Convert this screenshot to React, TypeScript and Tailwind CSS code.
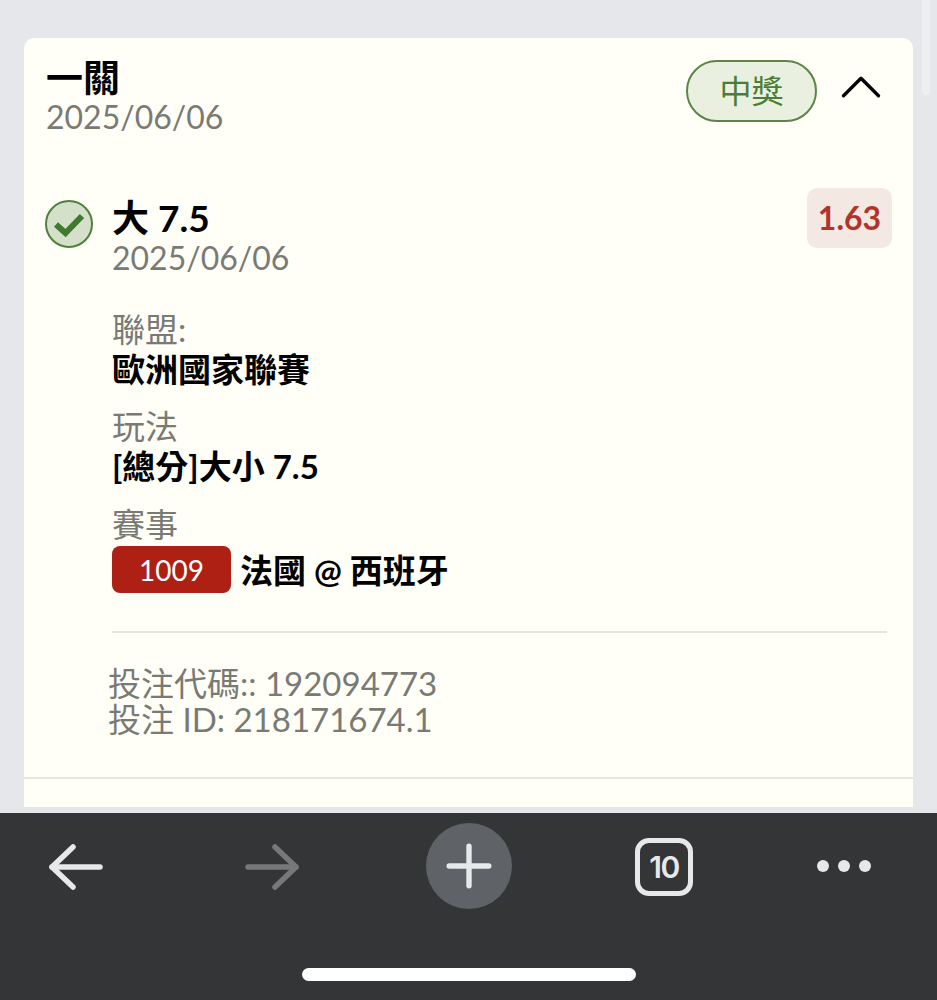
import { ChevronUp, Plus } from "lucide-react";

const font = "font-['Lato','Noto_Sans_CJK_TC',sans-serif]";

function Field({ label, value }: { label: string; value: string }) {
    return (
        <div className="mb-[16px]">
            <div className="text-[33px] leading-[40px] text-[#7a7a74]">{label}</div>
            <div className="text-[33px] leading-[41px] font-bold text-black">{value}</div>
        </div>
    );
}

function Arrow({ color, flip }: { color: string; flip?: boolean }) {
    return (
        <svg className={flip ? "w-[56px] h-[46px] mt-[21px] -scale-x-100" : "w-[56px] h-[46px] mt-[21px]"} viewBox="0 0 56 46" fill="none" stroke={color} strokeWidth="5.5" strokeLinecap="round" strokeLinejoin="round">
            <path d="M25 3 L4 23 L25 43" />
            <path d="M4 23 H52" />
        </svg>
    );
}

export default function App() {
    return (
        <div className={`${font} relative w-[937px] h-[1000px] overflow-hidden bg-[#e5e7eb] flex flex-col`}>
            {/* scrollbar */}
            <div className="absolute right-[7px] top-0 w-[8px] h-[95px] rounded-b-full bg-[#eceef1]" />

            <div className="flex-1 pt-[38px] pl-[24px] pr-[24px] pb-[6px] overflow-hidden">
                <div className="h-full bg-[#fffff8] rounded-t-[10px]">
                    {/* header */}
                    <div className="flex justify-between pl-[22px] pr-[17px] pt-[20px]">
                        <div>
                            <div className="text-[37px] leading-[40px] font-bold text-black">一關</div>
                            <div className="text-[32px] leading-[38px] text-[#7a7a74]">2025/06/06</div>
                        </div>
                        <div className="flex items-start gap-[9px] pt-[2px]">
                            <div className="w-[131px] h-[62px] rounded-full border-2 border-[#5a8546] bg-[#eaf0e0] flex items-center justify-center text-[32px] text-[#4c7d36]">
                                中獎
                            </div>
                            <ChevronUp className="w-[70px] h-[70px] -mt-[8px] text-black" strokeWidth={1.15} />
                        </div>
                    </div>

                    {/* selection */}
                    <div className="flex pl-[21px] pr-[21px] mt-[62px]">
                        <svg className="w-[48px] h-[48px] mt-[2px] shrink-0" viewBox="0 0 48 48">
                            <circle cx="24" cy="24" r="23" fill="#d5e0ca" stroke="#4f7f3d" strokeWidth="2" />
                            <path d="M11 24.5 L20.5 33 L37 16" fill="none" stroke="#3f7a2e" strokeWidth="6" strokeLinejoin="miter" />
                        </svg>
                        <div className="ml-[19px] flex-1">
                            <div className="flex justify-between items-start">
                                <div>
                                    <div className="text-[37px] leading-[40px] font-bold text-black">大 7.5</div>
                                    <div className="text-[32px] leading-[40px] text-[#7a7a74]">2025/06/06</div>
                                </div>
                                <div className="w-[85px] h-[60px] -mt-[10px] rounded-[10px] bg-[#f4e8e3] flex items-center justify-center text-[32px] font-bold text-[#ae352c]">
                                    1.63
                                </div>
                            </div>

                            <div className="mt-[31px]">
                                <Field label="聯盟:" value="歐洲國家聯賽" />
                                <Field label="玩法" value="[總分]大小 7.5" />
                                <div className="text-[33px] leading-[40px] pt-[1px] text-[#7a7a74]">賽事</div>
                                <div className="flex items-center gap-[9px] mt-[1px]">
                                    <div className="w-[119px] h-[47px] rounded-[8px] bg-[#ae2014] flex items-center justify-center text-[28px] text-white">
                                        1009
                                    </div>
                                    <div className="text-[33px] leading-[47px] mt-[2px] font-bold text-black">法國 @ 西班牙</div>
                                </div>
                                <div className="h-[2px] bg-[#e6e6df] mt-[37px] mr-[5px]" />
                            </div>
                        </div>
                    </div>

                    {/* ids */}
                    <div className="pl-[84px] pt-[32px] text-[33px] leading-[36px] text-[#7a7a74]">
                        <div>投注代碼:: 192094773</div>
                        <div>投注 ID: 218171674.1</div>
                    </div>
                    <div className="h-[2px] bg-[#e6e6df] mt-[40px]" />
                </div>
            </div>

            {/* browser toolbar */}
            <div className="h-[187px] bg-[#343537] shrink-0 relative">
                <div className="flex items-start pl-[48px] pt-[10px]">
                    <Arrow color="#e7e8ea" />
                    <div className="ml-[140px]">
                        <Arrow color="#77787a" flip />
                    </div>
                    <div className="ml-[126px] w-[86px] h-[86px] rounded-full bg-[#5f6266] flex items-center justify-center">
                        <Plus className="w-[68px] h-[68px]" color="#e7e8ea" strokeWidth={1.9} />
                    </div>
                    <div className="ml-[123px] w-[58px] h-[58px] mt-[15px] rounded-[14px] border-[5px] border-[#e7e8ea] flex items-center justify-center text-[30px] leading-none font-semibold text-[#e7e8ea] font-['Inter',sans-serif] tracking-[-1.5px]">
                        10
                    </div>
                    <div className="ml-[124px] flex gap-[9px] mt-[37px]">
                        <div className="w-[12px] h-[12px] rounded-full bg-[#e7e8ea]" />
                        <div className="w-[12px] h-[12px] rounded-full bg-[#e7e8ea]" />
                        <div className="w-[12px] h-[12px] rounded-full bg-[#e7e8ea]" />
                    </div>
                </div>
                {/* home indicator */}
                <div className="absolute left-[302px] top-[155px] w-[334px] h-[13px] rounded-full bg-white" />
            </div>
        </div>
    );
}
